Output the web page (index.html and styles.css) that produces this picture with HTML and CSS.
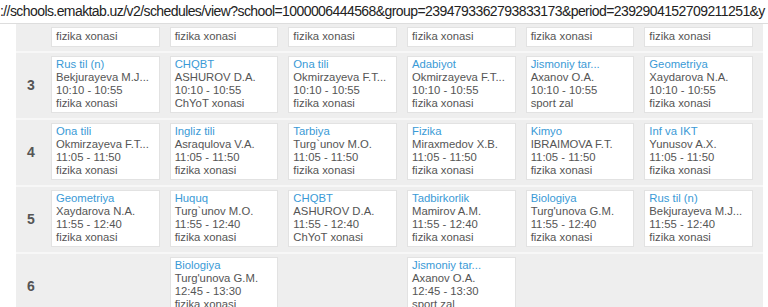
FILE: index.html
```html
<!DOCTYPE html>
<html>
<head>
<meta charset="utf-8">
<link rel="stylesheet" href="styles.css">
</head>
<body>
<div class="url">://schools.emaktab.uz/v2/schedules/view?school=1000006444568&amp;group=2394793362793833173&amp;period=2392904152709211251&amp;y</div>
<div class="table">
  <div class="row row-partial">
    <div class="num"></div>
    <div class="card"><div>fizika xonasi</div></div>
    <div class="card"><div>fizika xonasi</div></div>
    <div class="card"><div>fizika xonasi</div></div>
    <div class="card"><div>fizika xonasi</div></div>
    <div class="card"><div>fizika xonasi</div></div>
    <div class="card"><div>fizika xonasi</div></div>
  </div>
  <div class="row">
    <div class="num">3</div>
    <div class="card"><div class="subj">Rus til (n)</div><div>Bekjurayeva M.J...</div><div>10:10 - 10:55</div><div>fizika xonasi</div></div>
    <div class="card"><div class="subj">CHQBT</div><div>ASHUROV D.A.</div><div>10:10 - 10:55</div><div>ChYoT xonasi</div></div>
    <div class="card"><div class="subj">Ona tili</div><div>Okmirzayeva F.T...</div><div>10:10 - 10:55</div><div>fizika xonasi</div></div>
    <div class="card"><div class="subj">Adabiyot</div><div>Okmirzayeva F.T...</div><div>10:10 - 10:55</div><div>fizika xonasi</div></div>
    <div class="card"><div class="subj">Jismoniy tar...</div><div>Axanov O.A.</div><div>10:10 - 10:55</div><div>sport zal</div></div>
    <div class="card"><div class="subj">Geometriya</div><div>Xaydarova N.A.</div><div>10:10 - 10:55</div><div>fizika xonasi</div></div>
  </div>
  <div class="row">
    <div class="num">4</div>
    <div class="card"><div class="subj">Ona tili</div><div>Okmirzayeva F.T...</div><div>11:05 - 11:50</div><div>fizika xonasi</div></div>
    <div class="card"><div class="subj">Ingliz tili</div><div>Asraqulova V.A.</div><div>11:05 - 11:50</div><div>fizika xonasi</div></div>
    <div class="card"><div class="subj">Tarbiya</div><div>Turg`unov M.O.</div><div>11:05 - 11:50</div><div>fizika xonasi</div></div>
    <div class="card"><div class="subj">Fizika</div><div>Miraxmedov X.B.</div><div>11:05 - 11:50</div><div>fizika xonasi</div></div>
    <div class="card"><div class="subj">Kimyo</div><div>IBRAIMOVA F.T.</div><div>11:05 - 11:50</div><div>fizika xonasi</div></div>
    <div class="card"><div class="subj">Inf va IKT</div><div>Yunusov A.X.</div><div>11:05 - 11:50</div><div>fizika xonasi</div></div>
  </div>
  <div class="row">
    <div class="num">5</div>
    <div class="card"><div class="subj">Geometriya</div><div>Xaydarova N.A.</div><div>11:55 - 12:40</div><div>fizika xonasi</div></div>
    <div class="card"><div class="subj">Huquq</div><div>Turg`unov M.O.</div><div>11:55 - 12:40</div><div>fizika xonasi</div></div>
    <div class="card"><div class="subj">CHQBT</div><div>ASHUROV D.A.</div><div>11:55 - 12:40</div><div>ChYoT xonasi</div></div>
    <div class="card"><div class="subj">Tadbirkorlik</div><div>Mamirov A.M.</div><div>11:55 - 12:40</div><div>fizika xonasi</div></div>
    <div class="card"><div class="subj">Biologiya</div><div>Turg'unova G.M.</div><div>11:55 - 12:40</div><div>fizika xonasi</div></div>
    <div class="card"><div class="subj">Rus til (n)</div><div>Bekjurayeva M.J...</div><div>11:55 - 12:40</div><div>fizika xonasi</div></div>
  </div>
  <div class="row">
    <div class="num">6</div>
    <div class="empty"></div>
    <div class="card"><div class="subj">Biologiya</div><div>Turg'unova G.M.</div><div>12:45 - 13:30</div><div>fizika xonasi</div></div>
    <div class="empty"></div>
    <div class="card"><div class="subj">Jismoniy tar...</div><div>Axanov O.A.</div><div>12:45 - 13:30</div><div>sport zal</div></div>
    <div class="empty"></div>
    <div class="empty"></div>
  </div>
</div>
</body>
</html>
```

FILE: styles.css
```css
html, body {
  margin: 0;
  padding: 0;
  background: #ffffff;
  overflow: hidden;
}

body {
  width: 768px;
  height: 307px;
  font-family: "Liberation Sans", Arial, sans-serif;
}

.url {
  height: 24px;
  line-height: 22px;
  border-bottom: 1px solid #dddddd;
  font-size: 14px;
  letter-spacing: -0.58px;
  color: #222222;
  white-space: nowrap;
  overflow: hidden;
  box-sizing: border-box;
}

.table {
  margin-left: 16px;
  width: 747px;
  height: 290px;
  background: #eeeeee;
  overflow: hidden;
}

.row {
  display: grid;
  grid-template-columns: 35px repeat(6, 1fr);
  border-top: 2px solid #f7f7f7;
  padding: 3px 0 5px;
}

.row-partial {
  border-top: 0;
  padding: 3px 0 4px;
}

.num {
  align-self: center;
  padding-left: 11px;
  font-size: 14px;
  font-weight: bold;
  color: #555555;
}

.card {
  margin-right: 10px;
  background: #ffffff;
  border: 1px solid #e2e2e2;
  padding: 1px 4px 2px;
  font-size: 11.3px;
  line-height: 13px;
  color: #555555;
  white-space: nowrap;
  overflow: hidden;
}

.row-partial .card {
  padding: 2px 4px 3px;
}

.subj {
  color: #3a9ad6;
}
```
